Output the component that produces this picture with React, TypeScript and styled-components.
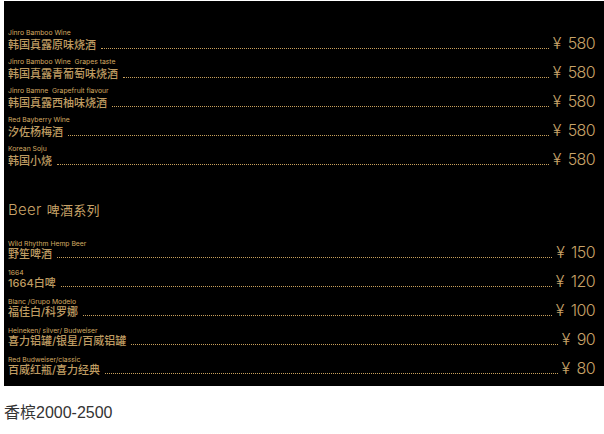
import React from 'react';
import styled, { createGlobalStyle } from 'styled-components';

const GlobalStyle = createGlobalStyle`
  html, body {
    margin: 0;
    padding: 0;
    background: #fff;
  }
`;

const Page = styled.div`
  padding: 1px 0 0 4px;
  font-family: "Liberation Sans", "Noto Sans CJK SC", sans-serif;
`;

const Menu = styled.div`
  height: 385px;
  box-sizing: border-box;
  padding: 28px 9px 0 4px;
  background: #000;
  color: #c8a368;
  font-family: Inter, "Noto Sans CJK SC", sans-serif;
`;

const Group = styled.div`
  display: flex;
  flex-direction: column;
  gap: 7px;
`;

const Row = styled.div`
  display: flex;
  flex-direction: column;
  height: 22px;
`;

const EnName = styled.div<{ $tight?: boolean }>`
  margin-top: ${props => (props.$tight ? '2px' : '0')};
  font-size: 6.8px;
  line-height: 8px;
  white-space: pre;
  color: #d4aa62;
`;

const Line = styled.div<{ $tight?: boolean }>`
  display: flex;
  align-items: flex-end;
  height: ${props => (props.$tight ? '12px' : '14px')};
`;

const CnName = styled.span`
  font-size: 11px;
  font-weight: 500;
  line-height: 12px;
  white-space: nowrap;
  color: #bf9c62;
`;

const Dots = styled.span`
  flex: 1;
  margin: 0 4px 2px 5px;
  border-bottom: 1px dotted #c8a05c;
`;

const Price = styled.span`
  position: relative;
  top: -1px;
  font-size: 16px;
  font-weight: 300;
  letter-spacing: -0.6px;
  word-spacing: 3px;
  line-height: 14px;
  white-space: pre;
`;

const Heading = styled.h3`
  margin: 33px 0 18px;
  font-size: 13px;
  font-weight: 400;
  line-height: 20px;
  letter-spacing: 0.3px;
`;

const HeadingLatin = styled.span`
  margin-right: 1px;
  font-size: 15px;
  font-weight: 300;
`;

const Footer = styled.p`
  margin: 18px 0 0;
  font-size: 16px;
  line-height: 18px;
  color: #333;
`;

interface Drink {
  en: string;
  cn: string;
  price: string;
}

const soju: Drink[] = [
  { en: 'Jinro Bamboo Wine', cn: '韩国真露原味烧酒', price: '¥ 580' },
  { en: 'Jinro Bamboo Wine  Grapes taste', cn: '韩国真露青葡萄味烧酒', price: '¥ 580' },
  { en: 'Jinro Bamne  Grapefruit flavour', cn: '韩国真露西柚味烧酒', price: '¥ 580' },
  { en: 'Red Bayberry Wine', cn: '汐佐杨梅酒', price: '¥ 580' },
  { en: 'Korean Soju', cn: '韩国小烧', price: '¥ 580' },
];

const beer: Drink[] = [
  { en: 'Wild Rhythm Hemp Beer', cn: '野笙啤酒', price: '¥ 150' },
  { en: '1664', cn: '1664白啤', price: '¥ 120' },
  { en: 'Blanc /Grupo Modelo', cn: '福佳白/科罗娜', price: '¥ 100' },
  { en: 'Heineken/ silver/ Budweiser', cn: '喜力铝罐/银星/百威铝罐', price: '¥ 90' },
  { en: 'Red Budweiser/classic', cn: '百威红瓶/喜力经典', price: '¥ 80' },
];

const DrinkList: React.FC<{ items: Drink[]; tight?: boolean }> = ({ items, tight }) => (
  <Group>
    {items.map((item, i) => (
      <Row key={i}>
        <EnName $tight={tight}>{item.en}</EnName>
        <Line $tight={tight}>
          <CnName>{item.cn}</CnName>
          <Dots />
          <Price>{item.price}</Price>
        </Line>
      </Row>
    ))}
  </Group>
);

const App: React.FC = () => (
  <Page>
    <GlobalStyle />
    <Menu>
      <DrinkList items={soju} />
      <Heading>
        <HeadingLatin>Beer</HeadingLatin> 啤酒系列
      </Heading>
      <DrinkList items={beer} tight />
    </Menu>
    <Footer>香槟2000-2500</Footer>
  </Page>
);

export default App;
